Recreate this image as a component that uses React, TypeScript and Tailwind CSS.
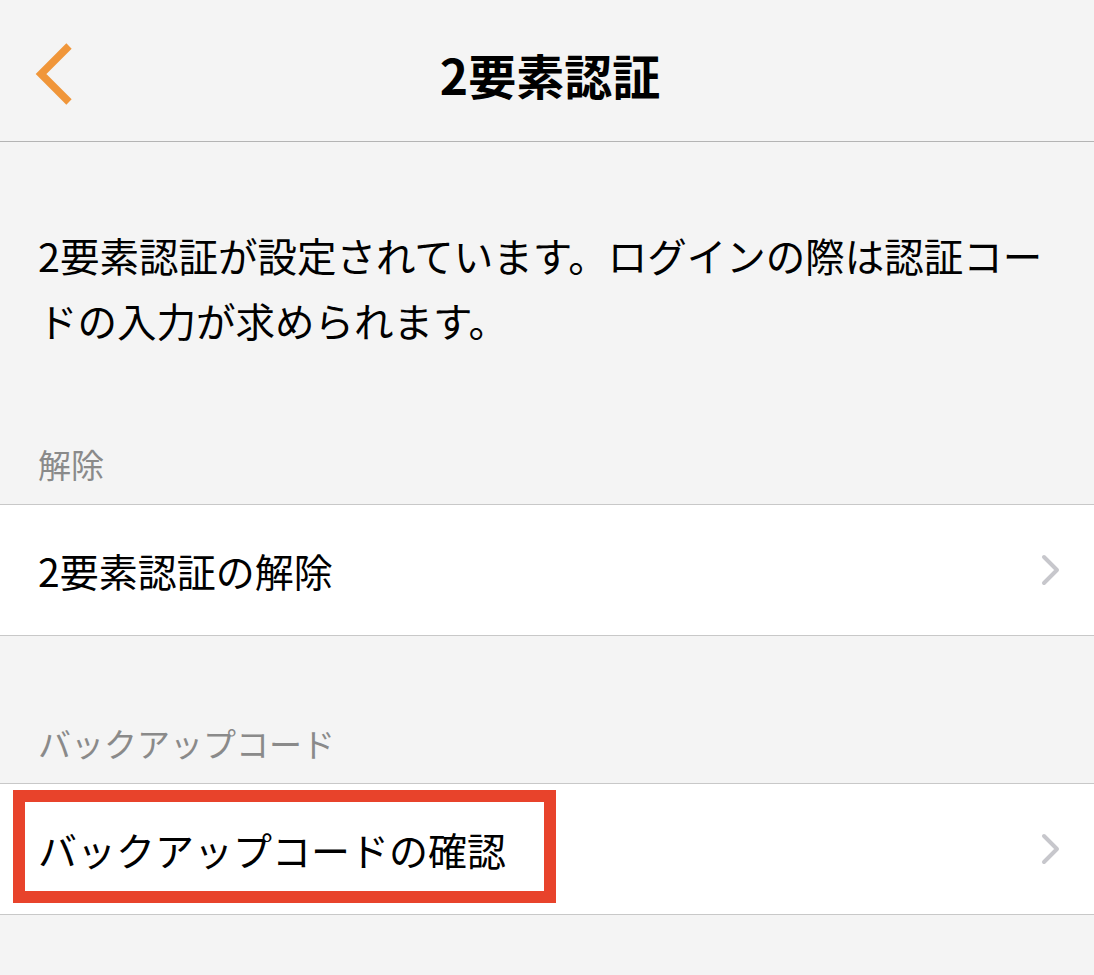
import React from 'react';

const FONT = { fontFamily: '"Noto Sans CJK JP", "Noto Sans", sans-serif' };

function BackChevron() {
  return (
    <svg width="44" height="68" viewBox="0 0 44 68" className="shrink-0">
      <path d="M39 6 L11 34 L39 62" fill="none" stroke="#f0963a" strokeWidth="7.5" strokeLinejoin="miter" />
    </svg>
  );
}

function RowChevron() {
  return (
    <svg width="22" height="32" viewBox="0 0 22 32" className="shrink-0">
      <path d="M4 3 L17 16 L4 29" fill="none" stroke="#c7c7cc" strokeWidth="4" strokeLinecap="round" strokeLinejoin="round" />
    </svg>
  );
}

function SectionLabel({ children, top }: { children: React.ReactNode; top: string }) {
  return (
    <div className={`${top} pb-4 px-[38px] text-[33px] leading-[48px] text-[#8a8a8a]`}>
      {children}
    </div>
  );
}

function NavRow({ label, highlight }: { label: string; highlight?: boolean }) {
  return (
    <div className="relative flex h-[132px] items-center justify-between border-y border-[#c8c8c8] bg-white pl-[38px] pr-[32px]">
      <span className="text-[39px] leading-none text-black">{label}</span>
      <RowChevron />
      {highlight && (
        <div className="pointer-events-none absolute left-[13px] top-[6px] h-[113px] w-[543px] border-[12px] border-[#e8432b]" />
      )}
    </div>
  );
}

export default function App() {
  return (
    <div className="min-h-[975px] w-full bg-[#f4f4f4]" style={FONT}>
      {/* header */}
      <div className="relative flex h-[142px] items-center border-b border-[#b4b4b4] px-[30px] pt-[7px]">
        <BackChevron />
        <h1 className="absolute inset-x-0 top-[6px] bottom-0 flex items-center justify-center pl-[6px] text-[48px] font-bold text-black">
          2要素認証
        </h1>
      </div>

      <p className="px-[38px] pt-[80px] text-[39.5px] leading-[65px] text-black">
        2要素認証が設定されています。ログインの際は認証コードの入力が求められます。
      </p>

      <SectionLabel top="pt-[88px]">解除</SectionLabel>
      <NavRow label="2要素認証の解除" />

      <SectionLabel top="pt-[83px]">バックアップコード</SectionLabel>
      <NavRow label="バックアップコードの確認" highlight />
    </div>
  );
}
